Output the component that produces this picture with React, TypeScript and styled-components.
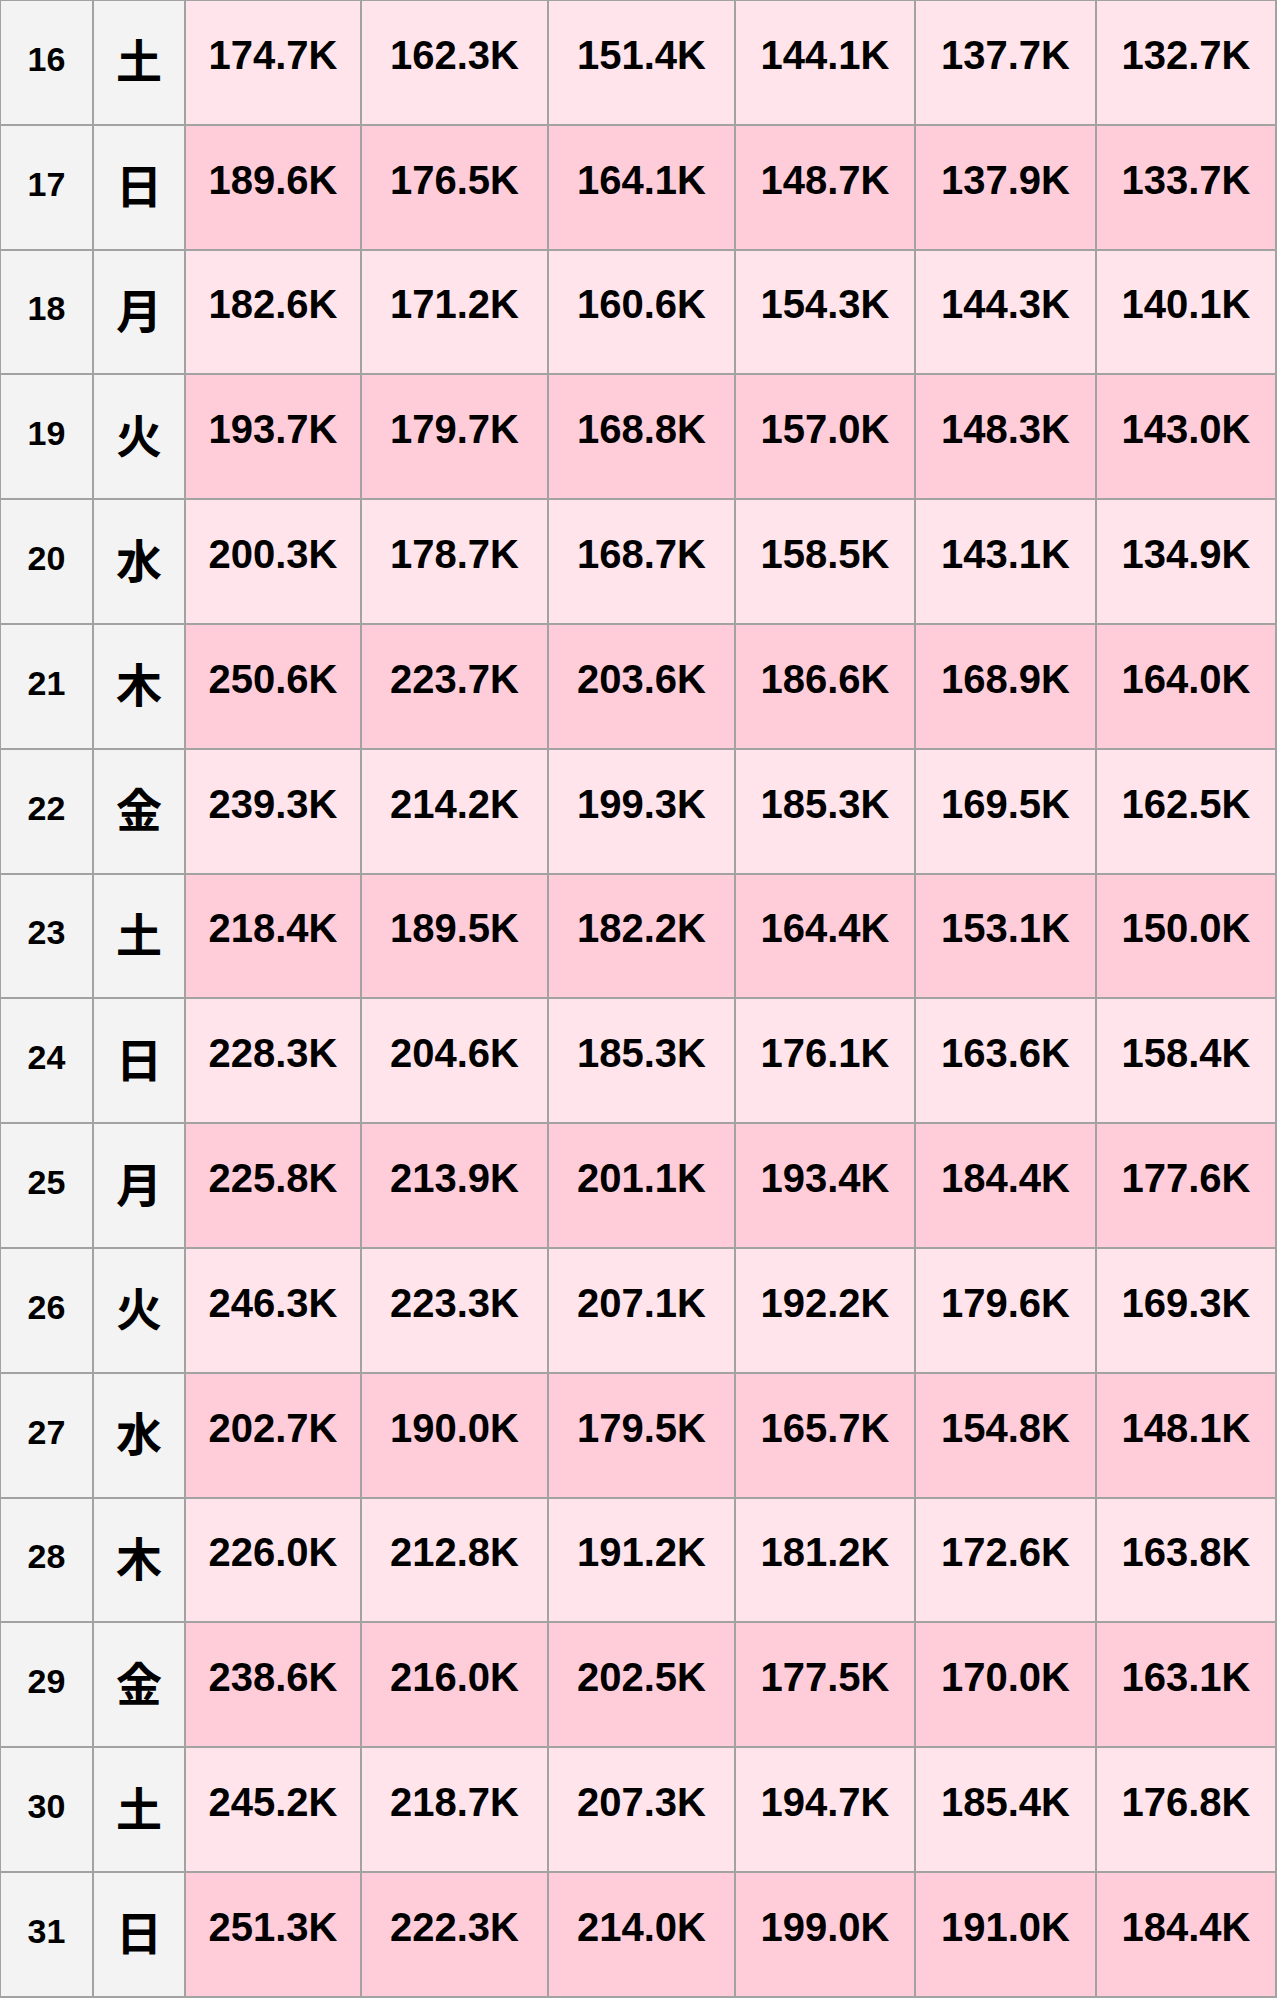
import React from "react";
import styled, { createGlobalStyle } from "styled-components";

const GlobalStyle = createGlobalStyle`
  html, body {
    margin: 0;
    padding: 0;
    background: #ffffff;
  }
`

const Sheet = styled.div`
  display: grid;
  grid-template-columns: 93px 92px 176px 187px 187px 180px 181px 180px;
  grid-auto-rows: 124.8px;
  width: 1277px;
  box-sizing: border-box;
  border-top: 1px solid #a2a2a2;
  border-left: 1px solid #a2a2a2;
`

const Cell = styled.div`
  box-sizing: border-box;
  border-right: 2px solid #a2a2a2;
  border-bottom: 2px solid #a2a2a2;
  display: flex;
  align-items: center;
  justify-content: center;
  color: #000;
`

const DayCell = styled(Cell)`
  background: #f3f3f3;
  font-family: "Liberation Sans", Arial, sans-serif;
  font-weight: 700;
  font-size: 34px;
  padding-bottom: 6px;
`

const WeekdayCell = styled(Cell)`
  background: #f3f3f3;
  font-family: "Noto Sans CJK JP", "Noto Sans", sans-serif;
  font-weight: 700;
  font-size: 46px;
  padding-bottom: 8px;
`

const ValueCell = styled(Cell)<{ $shade: boolean }>`
  background: ${p => (p.$shade ? "#ffcdd9" : "#ffe5eb")};
  font-family: "Liberation Sans", Arial, sans-serif;
  font-weight: 700;
  font-size: 40px;
  padding-bottom: 14px;
`

type Row = [number, string, string[]]

const rows: Row[] = [
  [16, "土", ["174.7K", "162.3K", "151.4K", "144.1K", "137.7K", "132.7K"]],
  [17, "日", ["189.6K", "176.5K", "164.1K", "148.7K", "137.9K", "133.7K"]],
  [18, "月", ["182.6K", "171.2K", "160.6K", "154.3K", "144.3K", "140.1K"]],
  [19, "火", ["193.7K", "179.7K", "168.8K", "157.0K", "148.3K", "143.0K"]],
  [20, "水", ["200.3K", "178.7K", "168.7K", "158.5K", "143.1K", "134.9K"]],
  [21, "木", ["250.6K", "223.7K", "203.6K", "186.6K", "168.9K", "164.0K"]],
  [22, "金", ["239.3K", "214.2K", "199.3K", "185.3K", "169.5K", "162.5K"]],
  [23, "土", ["218.4K", "189.5K", "182.2K", "164.4K", "153.1K", "150.0K"]],
  [24, "日", ["228.3K", "204.6K", "185.3K", "176.1K", "163.6K", "158.4K"]],
  [25, "月", ["225.8K", "213.9K", "201.1K", "193.4K", "184.4K", "177.6K"]],
  [26, "火", ["246.3K", "223.3K", "207.1K", "192.2K", "179.6K", "169.3K"]],
  [27, "水", ["202.7K", "190.0K", "179.5K", "165.7K", "154.8K", "148.1K"]],
  [28, "木", ["226.0K", "212.8K", "191.2K", "181.2K", "172.6K", "163.8K"]],
  [29, "金", ["238.6K", "216.0K", "202.5K", "177.5K", "170.0K", "163.1K"]],
  [30, "土", ["245.2K", "218.7K", "207.3K", "194.7K", "185.4K", "176.8K"]],
  [31, "日", ["251.3K", "222.3K", "214.0K", "199.0K", "191.0K", "184.4K"]],
]

export default function App() {
  return (
    <>
      <GlobalStyle />
      <Sheet>
        {rows.map(([day, weekday, values], i) => (
          <React.Fragment key={day}>
            <DayCell>{day}</DayCell>
            <WeekdayCell>{weekday}</WeekdayCell>
            {values.map((v, j) => (
              <ValueCell key={j} $shade={i % 2 === 1}>{v}</ValueCell>
            ))}
          </React.Fragment>
        ))}
      </Sheet>
    </>
  )
}
